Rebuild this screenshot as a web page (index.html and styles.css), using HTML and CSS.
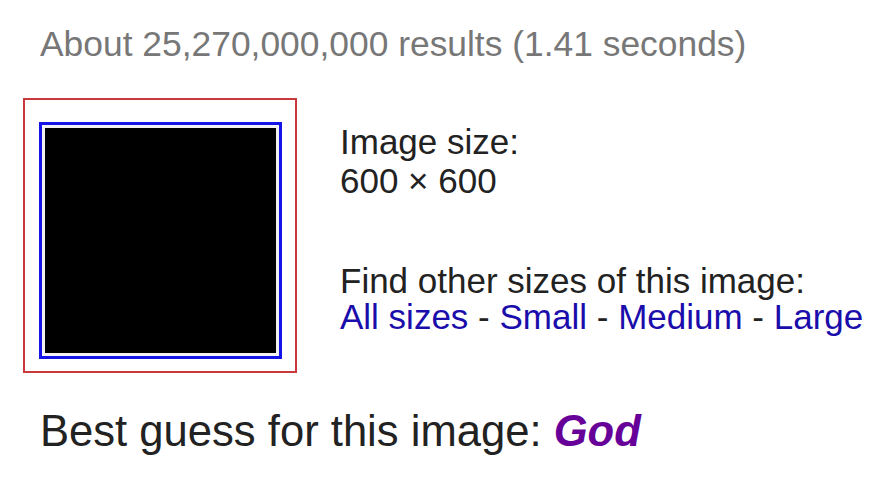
FILE: index.html
```html
<!DOCTYPE html>
<html lang="en">
<head>
  <meta charset="UTF-8">
  <title>Search by image</title>
  <link rel="stylesheet" href="styles.css">
</head>
<body>
  <div class="results">
    <div class="stats">About 25,270,000,000 results (1.41 seconds)</div>

    <!-- Image preview and size info -->
    <div class="image-row">
      <div class="thumb-frame">
        <div class="thumb">
          <div class="thumb-img"></div>
        </div>
      </div>
      <div class="image-info">
        <p class="size">Image size:<br>600 × 600</p>
        <p class="other-sizes">
          Find other sizes of this image:<br>
          <a href="#">All sizes</a> - <a href="#">Small</a> - <a href="#">Medium</a> - <a href="#">Large</a>
        </p>
      </div>
    </div>

    <div class="best-guess">Best guess for this image: <a href="#" class="guess">God</a></div>
  </div>
</body>
</html>
```

FILE: styles.css
```css
body {
  margin: 0;
  background: #fff;
  font-family: "Liberation Sans", Arial, sans-serif;
  color: #222;
}
.results {
  padding-top: 24px;
}
.stats {
  padding-left: 40px;
  font-size: 35.4px;
  line-height: 40px;
  color: #777;
  white-space: nowrap;
}
.image-row {
  display: flex;
  margin-top: 34px;
  padding-left: 23px;
}
.thumb-frame {
  box-sizing: border-box;
  width: 274px;
  height: 275px;
  border: 2px solid #c9393b;
  padding: 22px 0 0 14px;
}
.thumb {
  box-sizing: border-box;
  width: 243px;
  height: 237px;
  border: 3px solid #1414e8;
  padding: 3px;
  background: #f2f2f2;
}
.thumb-img {
  width: 100%;
  height: 100%;
  background: #000;
}
.image-info {
  margin-left: 43px;
  padding-top: 24px;
  font-size: 35px;
  white-space: nowrap;
}
.image-info p {
  margin: 0;
}
.size {
  line-height: 39px;
}
.image-info .other-sizes {
  margin-top: 63px;
  line-height: 36px;
}
a {
  color: #1a0dab;
  text-decoration: none;
}
.best-guess {
  margin-top: 34px;
  padding-left: 40px;
  font-size: 43.6px;
  line-height: 49px;
  white-space: nowrap;
}
.best-guess .guess {
  color: #660099;
  font-weight: bold;
  font-style: italic;
}
```
